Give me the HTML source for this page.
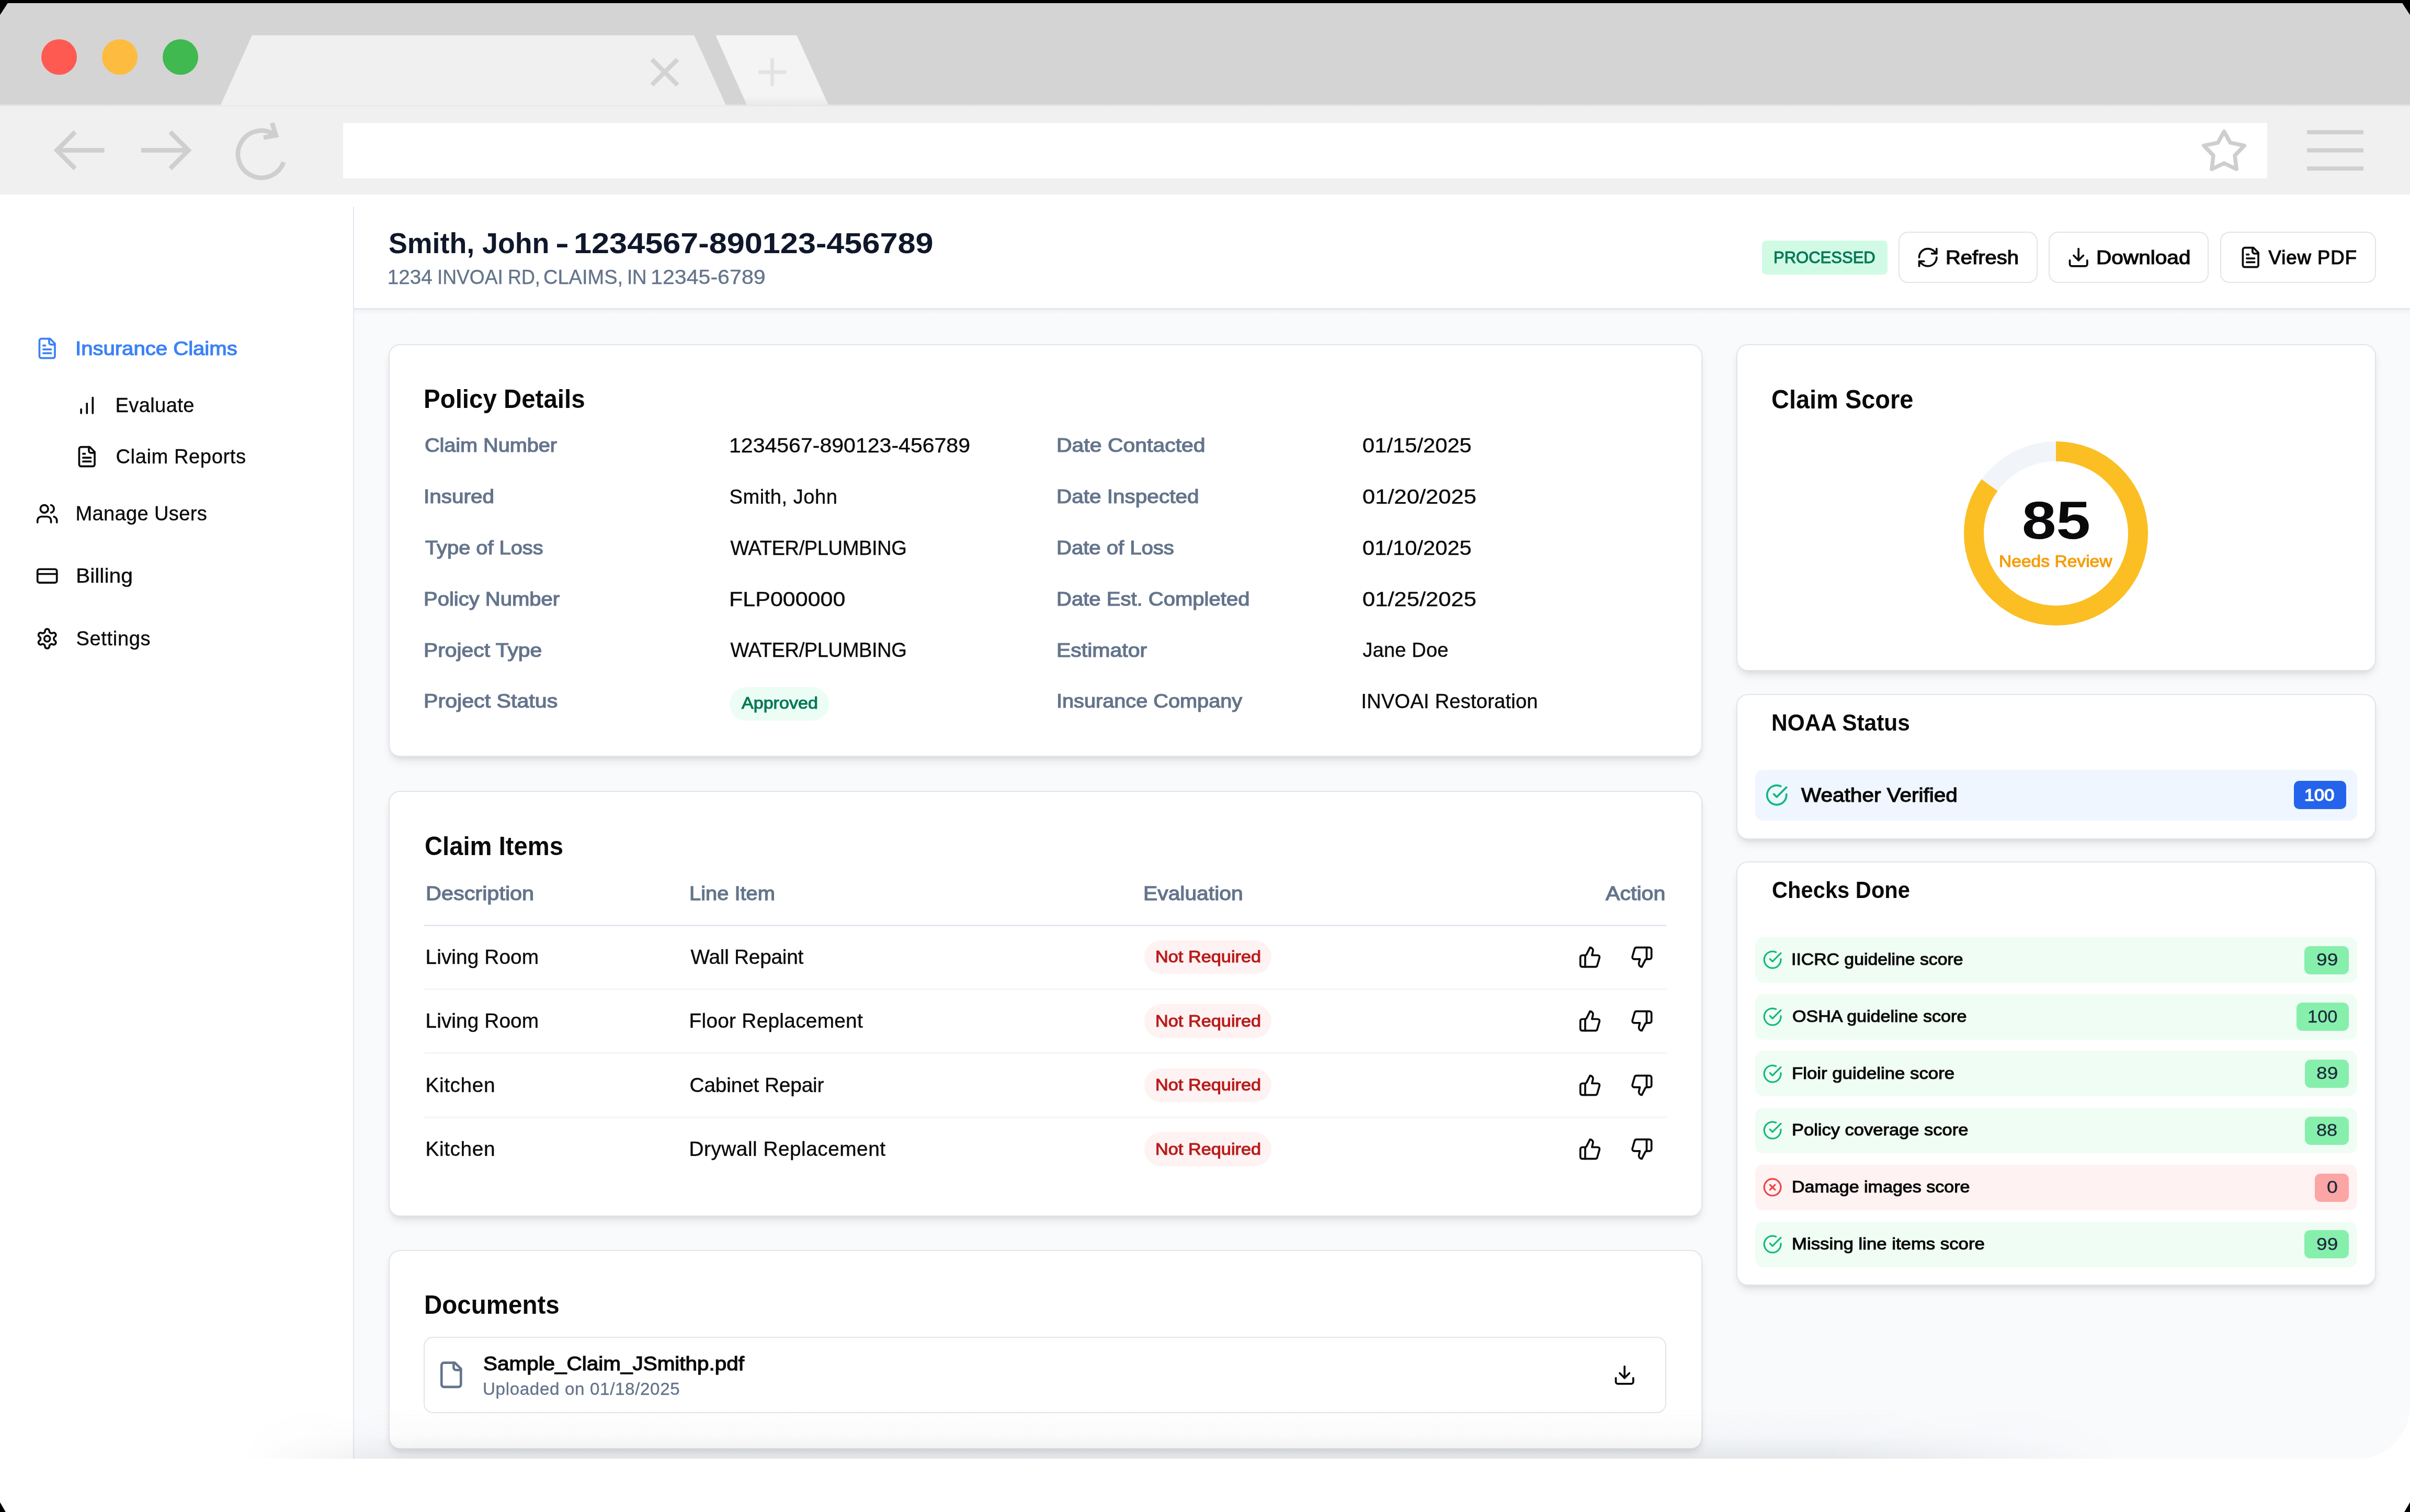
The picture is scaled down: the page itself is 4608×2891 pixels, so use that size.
<!DOCTYPE html>
<html><head><meta charset="utf-8"><title>Claim</title><style>
html,body{margin:0;padding:0}body{width:4608px;height:2891px;background:#000;position:relative;font-family:"Liberation Sans",sans-serif}
div,svg,span{position:absolute;box-sizing:border-box}span{white-space:nowrap;line-height:1;transform-origin:0 0}
.b{font-weight:700}
</style></head><body>
<div style="left:0;top:6px;width:4608px;height:2885px;clip-path:polygon(15px 0,4593px 0,4608px 23px,4608px 2866px,4597px 2885px,11px 2885px,0 2866px,0 23px);overflow:hidden;background:#fff">
<div style="left:0;top:-6px;width:4608px;height:2891px;will-change:transform">
<div style="left:0px;top:0px;width:4608px;height:201px;background:#d4d4d4;border-radius:0px;"></div>
<div style="left:0px;top:201px;width:4608px;height:171px;background:#f0f0f0;border-radius:0px;"></div>
<div style="left:0px;top:198px;width:4608px;height:6px;background:linear-gradient(#d4d4d4,#f0f0f0);border-radius:0px;"></div>
<div style="left:656px;top:234.5px;width:3678.5px;height:106.2px;background:#fff;border-radius:0px;"></div>
<svg style="left:0;top:0" width="4608" height="380" viewBox="0 0 4608 380"><defs><linearGradient id="ng" x1="0" y1="0" x2="0" y2="1"><stop offset="0" stop-color="#f4f4f4"/><stop offset=".86" stop-color="#f4f4f4"/><stop offset="1" stop-color="#e9e9e9"/></linearGradient></defs><polygon points="482,67.4 1327.2,67.4 1388.2,201.6 421.5,201.6" fill="#f0f0f0"/><polygon points="1368.2,67.4 1523.3,67.4 1584.3,201.3 1428.3,201.3" fill="url(#ng)"/><path d="M1246.400 113.500 L1295.400 162.500 M1295.400 113.500 L1246.400 162.500" stroke="#d3d3d3" stroke-width="8.700" fill="none"/><path d="M1450.200 138 H1503 M1476.600 111.500 V164.500" stroke="#e3e3e3" stroke-width="7" fill="none"/><g stroke="#cfcfcf" stroke-width="8.700" fill="none" stroke-linejoin="miter"><path d="M199.700 287.300 H108.700 M143.700 252.300 L108.700 287.300 L143.700 322.300"/><path d="M269.900 287.300 H360.400 M325.400 252.300 L360.400 287.300 L325.400 322.300"/><path d="M542.300 310.100 A45 45 0 1 1 526.600 258.500"/><path d="M520.100 235.100 L527.700 258.800 L504 263"/></g><path d="M4252.500 251.500 L4264.400 272.800 L4291.200 278.300 L4273 297.300 L4276.200 323.300 L4252.500 312.200 L4228.900 323.300 L4232 297.300 L4213.900 278.300 L4240.700 272.800 Z" fill="none" stroke="#cecece" stroke-width="7.500" stroke-linejoin="round"/><g fill="#d0d0d0"><rect x="4411" y="248.800" width="108" height="8"/><rect x="4411" y="283.500" width="108" height="8"/><rect x="4411" y="318.200" width="108" height="8"/></g></svg>
<div style="left:78.9px;top:74.8px;width:68px;height:68px;background:#ff5a52;border-radius:34px;"></div>
<div style="left:194.9px;top:74.8px;width:68px;height:68px;background:#fdbc40;border-radius:34px;"></div>
<div style="left:311.4px;top:74.8px;width:68px;height:68px;background:#3fb950;border-radius:34px;"></div>
<div style="left:0px;top:372px;width:4608px;height:2417px;background:#fff;border-radius:0px;"></div>
<div style="left:677px;top:592px;width:3931px;height:2197px;background:#f8fafc;border-radius:0 0 100px 0;"></div>
<div style="left:677px;top:372px;width:3931px;height:220px;background:#fff;border-radius:0;border-bottom:3px solid #e2e8f0"></div>
<div style="left:677px;top:592px;width:3931px;height:10px;background:linear-gradient(rgba(15,23,42,.035),rgba(15,23,42,0));border-radius:0px;"></div>
<div style="left:675px;top:395px;width:2.3px;height:2394px;background:#e2e8f0;border-radius:0px;"></div>
<div style="left:742.9px;top:658.3px;width:2511.8px;height:788.5px;background:#fff;border-radius:22px;border:2.7px solid #e4e4e7;box-shadow:0 11px 17px -3px rgba(0,0,0,.09),0 5px 11px -5px rgba(0,0,0,.09)"></div>
<div style="left:742.9px;top:1511.8px;width:2511.8px;height:814px;background:#fff;border-radius:22px;border:2.7px solid #e4e4e7;box-shadow:0 11px 17px -3px rgba(0,0,0,.09),0 5px 11px -5px rgba(0,0,0,.09)"></div>
<div style="left:742.9px;top:2389.8px;width:2511.8px;height:381px;background:#fff;border-radius:22px;border:2.7px solid #e4e4e7;box-shadow:0 11px 17px -3px rgba(0,0,0,.09),0 5px 11px -5px rgba(0,0,0,.09)"></div>
<div style="left:3319.9px;top:658.3px;width:1222.8px;height:625px;background:#fff;border-radius:22px;border:2.7px solid #e4e4e7;box-shadow:0 11px 17px -3px rgba(0,0,0,.09),0 5px 11px -5px rgba(0,0,0,.09)"></div>
<div style="left:3319.9px;top:1326.8px;width:1222.8px;height:278px;background:#fff;border-radius:22px;border:2.7px solid #e4e4e7;box-shadow:0 11px 17px -3px rgba(0,0,0,.09),0 5px 11px -5px rgba(0,0,0,.09)"></div>
<div style="left:3319.9px;top:1646.8px;width:1222.8px;height:811.5px;background:#fff;border-radius:22px;border:2.7px solid #e4e4e7;box-shadow:0 11px 17px -3px rgba(0,0,0,.09),0 5px 11px -5px rgba(0,0,0,.09)"></div>
<svg style="left:67.5px;top:644.3px" width="44.4" height="44.4" viewBox="0 0 24 24" fill="none" stroke="#3b82f6" stroke-width="2" stroke-linecap="round" stroke-linejoin="round"><path d="M15 2H6a2 2 0 0 0-2 2v16a2 2 0 0 0 2 2h12a2 2 0 0 0 2-2V7Z"/><path d="M14 2v4a2 2 0 0 0 2 2h4"/><path d="M10 9H8"/><path d="M16 13H8"/><path d="M16 17H8"/></svg>
<svg style="left:143.5px;top:752.8px" width="44.4" height="44.4" viewBox="0 0 24 24" fill="none" stroke="#0a0a0a" stroke-width="2" stroke-linecap="round" stroke-linejoin="round"><path d="M12 20V10"/><path d="M18 20V4"/><path d="M6 20v-4"/></svg>
<svg style="left:143.5px;top:850.5px" width="44.4" height="44.4" viewBox="0 0 24 24" fill="none" stroke="#0a0a0a" stroke-width="2" stroke-linecap="round" stroke-linejoin="round"><path d="M15 2H6a2 2 0 0 0-2 2v16a2 2 0 0 0 2 2h12a2 2 0 0 0 2-2V7Z"/><path d="M14 2v4a2 2 0 0 0 2 2h4"/><path d="M10 9H8"/><path d="M16 13H8"/><path d="M16 17H8"/></svg>
<svg style="left:67.8px;top:959.5px" width="44.4" height="44.4" viewBox="0 0 24 24" fill="none" stroke="#0a0a0a" stroke-width="2" stroke-linecap="round" stroke-linejoin="round"><path d="M16 21v-2a4 4 0 0 0-4-4H6a4 4 0 0 0-4 4v2"/><circle cx="9" cy="7" r="4"/><path d="M22 21v-2a4 4 0 0 0-3-3.87"/><path d="M16 3.13a4 4 0 0 1 0 7.75"/></svg>
<svg style="left:67.8px;top:1078.8px" width="44.4" height="44.4" viewBox="0 0 24 24" fill="none" stroke="#0a0a0a" stroke-width="2" stroke-linecap="round" stroke-linejoin="round"><rect width="20" height="14" x="2" y="5" rx="2"/><path d="M2 10h20"/></svg>
<svg style="left:67.8px;top:1198.5px" width="44.4" height="44.4" viewBox="0 0 24 24" fill="none" stroke="#0a0a0a" stroke-width="2" stroke-linecap="round" stroke-linejoin="round"><path d="M12.22 2h-.44a2 2 0 0 0-2 2v.18a2 2 0 0 1-1 1.73l-.43.25a2 2 0 0 1-2 0l-.15-.08a2 2 0 0 0-2.73.73l-.22.38a2 2 0 0 0 .73 2.73l.15.1a2 2 0 0 1 1 1.72v.51a2 2 0 0 1-1 1.74l-.15.09a2 2 0 0 0-.73 2.73l.22.38a2 2 0 0 0 2.73.73l.15-.08a2 2 0 0 1 2 0l.43.25a2 2 0 0 1 1 1.73V20a2 2 0 0 0 2 2h.44a2 2 0 0 0 2-2v-.18a2 2 0 0 1 1-1.73l.43-.25a2 2 0 0 1 2 0l.15.08a2 2 0 0 0 2.73-.73l.22-.39a2 2 0 0 0-.73-2.73l-.15-.08a2 2 0 0 1-1-1.74v-.5a2 2 0 0 1 1-1.74l.15-.09a2 2 0 0 0 .73-2.73l-.22-.38a2 2 0 0 0-2.73-.73l-.15.08a2 2 0 0 1-2 0l-.43-.25a2 2 0 0 1-1-1.73V4a2 2 0 0 0-2-2z"/><circle cx="12" cy="12" r="3"/></svg>
<div style="left:3369px;top:460px;width:239.5px;height:65px;background:#d1fae5;border-radius:8px;"></div>
<div style="left:3629.5px;top:443px;width:266px;height:98px;background:#fff;border-radius:18px;border:2.8px solid #e4e4e7"></div>
<div style="left:3917px;top:443px;width:306px;height:98px;background:#fff;border-radius:18px;border:2.8px solid #e4e4e7"></div>
<div style="left:4244.5px;top:443px;width:298.5px;height:98px;background:#fff;border-radius:18px;border:2.8px solid #e4e4e7"></div>
<svg style="left:3663.5px;top:470.3px" width="44.4" height="44.4" viewBox="0 0 24 24" fill="none" stroke="#0a0a0a" stroke-width="2" stroke-linecap="round" stroke-linejoin="round"><path d="M3 12a9 9 0 0 1 9-9 9.75 9.75 0 0 1 6.74 2.74L21 8"/><path d="M21 3v5h-5"/><path d="M21 12a9 9 0 0 1-9 9 9.75 9.75 0 0 1-6.74-2.74L3 16"/><path d="M8 16H3v5"/></svg>
<svg style="left:3952px;top:470.3px" width="44.4" height="44.4" viewBox="0 0 24 24" fill="none" stroke="#0a0a0a" stroke-width="2" stroke-linecap="round" stroke-linejoin="round"><path d="M21 15v4a2 2 0 0 1-2 2H5a2 2 0 0 1-2-2v-4"/><path d="m7 10 5 5 5-5"/><path d="M12 15V3"/></svg>
<svg style="left:4281.1px;top:470.3px" width="44.4" height="44.4" viewBox="0 0 24 24" fill="none" stroke="#0a0a0a" stroke-width="2" stroke-linecap="round" stroke-linejoin="round"><path d="M15 2H6a2 2 0 0 0-2 2v16a2 2 0 0 0 2 2h12a2 2 0 0 0 2-2V7Z"/><path d="M14 2v4a2 2 0 0 0 2 2h4"/><path d="M10 9H8"/><path d="M16 13H8"/><path d="M16 17H8"/></svg>
<div style="left:1395px;top:1314px;width:190px;height:64px;background:#ecfdf5;border-radius:32px;"></div>
<svg style="left:3751px;top:840px" width="360" height="360" viewBox="-180 -180 360 360"><circle r="157" fill="none" stroke="#f1f5f9" stroke-width="38"/><circle r="157" fill="none" stroke="#fbbf24" stroke-width="38" stroke-dasharray="838.491 986.46" transform="rotate(-90)"/></svg>
<div style="left:3355.5px;top:1471.5px;width:1151.5px;height:97px;background:#eff6ff;border-radius:15px;"></div>
<svg style="left:3375.3px;top:1497.55px" width="44.4" height="44.4" viewBox="0 0 24 24" fill="none" stroke="#10b981" stroke-width="2" stroke-linecap="round" stroke-linejoin="round"><path d="M22 11.08V12a10 10 0 1 1-5.93-9.14"/><path d="M22 4 12 14.01l-3-3"/></svg>
<div style="left:4385.5px;top:1493px;width:100px;height:54px;background:#2563eb;border-radius:10px;"></div>
<div style="left:3355.5px;top:1792px;width:1151.5px;height:87px;background:#f0fdf4;border-radius:15px;"></div>
<svg style="left:3370.3px;top:1816.3px" width="38.2" height="38.2" viewBox="0 0 24 24" fill="none" stroke="#10b981" stroke-width="2" stroke-linecap="round" stroke-linejoin="round"><path d="M22 11.08V12a10 10 0 1 1-5.93-9.14"/><path d="M22 4 12 14.01l-3-3"/></svg>
<div style="left:4405.5px;top:1808.5px;width:85px;height:54px;background:#86efac;border-radius:11px;"></div>
<div style="left:3355.5px;top:1900.75px;width:1151.5px;height:87px;background:#f0fdf4;border-radius:15px;"></div>
<svg style="left:3370.3px;top:1925.05px" width="38.2" height="38.2" viewBox="0 0 24 24" fill="none" stroke="#10b981" stroke-width="2" stroke-linecap="round" stroke-linejoin="round"><path d="M22 11.08V12a10 10 0 1 1-5.93-9.14"/><path d="M22 4 12 14.01l-3-3"/></svg>
<div style="left:4390.5px;top:1917.25px;width:100px;height:54px;background:#86efac;border-radius:11px;"></div>
<div style="left:3355.5px;top:2009.25px;width:1151.5px;height:87px;background:#f0fdf4;border-radius:15px;"></div>
<svg style="left:3370.3px;top:2033.55px" width="38.2" height="38.2" viewBox="0 0 24 24" fill="none" stroke="#10b981" stroke-width="2" stroke-linecap="round" stroke-linejoin="round"><path d="M22 11.08V12a10 10 0 1 1-5.93-9.14"/><path d="M22 4 12 14.01l-3-3"/></svg>
<div style="left:4407px;top:2025.75px;width:83.5px;height:54px;background:#86efac;border-radius:11px;"></div>
<div style="left:3355.5px;top:2118px;width:1151.5px;height:87px;background:#f0fdf4;border-radius:15px;"></div>
<svg style="left:3370.3px;top:2142.3px" width="38.2" height="38.2" viewBox="0 0 24 24" fill="none" stroke="#10b981" stroke-width="2" stroke-linecap="round" stroke-linejoin="round"><path d="M22 11.08V12a10 10 0 1 1-5.93-9.14"/><path d="M22 4 12 14.01l-3-3"/></svg>
<div style="left:4407px;top:2134.5px;width:83.5px;height:54px;background:#86efac;border-radius:11px;"></div>
<div style="left:3355.5px;top:2227px;width:1151.5px;height:87px;background:#fef2f2;border-radius:15px;"></div>
<svg style="left:3370.3px;top:2251.3px" width="38.2" height="38.2" viewBox="0 0 24 24" fill="none" stroke="#ef4444" stroke-width="2" stroke-linecap="round" stroke-linejoin="round"><circle cx="12" cy="12" r="10"/><path d="m15 9-6 6"/><path d="m9 9 6 6"/></svg>
<div style="left:4426px;top:2243.5px;width:64.5px;height:54px;background:#fca5a5;border-radius:11px;"></div>
<div style="left:3355.5px;top:2335.75px;width:1151.5px;height:87px;background:#f0fdf4;border-radius:15px;"></div>
<svg style="left:3370.3px;top:2360.05px" width="38.2" height="38.2" viewBox="0 0 24 24" fill="none" stroke="#10b981" stroke-width="2" stroke-linecap="round" stroke-linejoin="round"><path d="M22 11.08V12a10 10 0 1 1-5.93-9.14"/><path d="M22 4 12 14.01l-3-3"/></svg>
<div style="left:4405.5px;top:2352.25px;width:85px;height:54px;background:#86efac;border-radius:11px;"></div>
<div style="left:811px;top:1767.5px;width:2375px;height:3px;background:#e2e8f0;border-radius:0px;"></div>
<div style="left:2187.5px;top:1797.5px;width:243.5px;height:64.5px;background:#fef2f2;border-radius:33px;"></div>
<svg style="left:3018.3px;top:1807.8px" width="44.4" height="44.4" viewBox="0 0 24 24" fill="none" stroke="#0a0a0a" stroke-width="2" stroke-linecap="round" stroke-linejoin="round"><path d="M7 10v12"/><path d="M15 5.88 14 10h5.83a2 2 0 0 1 1.92 2.56l-2.33 8A2 2 0 0 1 17.5 22H4a2 2 0 0 1-2-2v-8a2 2 0 0 1 2-2h2.76a2 2 0 0 0 1.79-1.11L12 2a3.13 3.13 0 0 1 3 3.88Z"/></svg>
<svg style="left:3117.3px;top:1807.8px" width="44.4" height="44.4" viewBox="0 0 24 24" fill="none" stroke="#0a0a0a" stroke-width="2" stroke-linecap="round" stroke-linejoin="round"><path d="M17 14V2"/><path d="M9 18.12 10 14H4.17a2 2 0 0 1-1.92-2.56l2.33-8A2 2 0 0 1 6.5 2H20a2 2 0 0 1 2 2v8a2 2 0 0 1-2 2h-2.76a2 2 0 0 0-1.79 1.11L12 22a3.13 3.13 0 0 1-3-3.88Z"/></svg>
<div style="left:811px;top:1889.5px;width:2375px;height:3px;background:#f1f5f9;border-radius:0px;"></div>
<div style="left:2187.5px;top:1920px;width:243.5px;height:64.5px;background:#fef2f2;border-radius:33px;"></div>
<svg style="left:3018.3px;top:1930.3px" width="44.4" height="44.4" viewBox="0 0 24 24" fill="none" stroke="#0a0a0a" stroke-width="2" stroke-linecap="round" stroke-linejoin="round"><path d="M7 10v12"/><path d="M15 5.88 14 10h5.83a2 2 0 0 1 1.92 2.56l-2.33 8A2 2 0 0 1 17.5 22H4a2 2 0 0 1-2-2v-8a2 2 0 0 1 2-2h2.76a2 2 0 0 0 1.79-1.11L12 2a3.13 3.13 0 0 1 3 3.88Z"/></svg>
<svg style="left:3117.3px;top:1930.3px" width="44.4" height="44.4" viewBox="0 0 24 24" fill="none" stroke="#0a0a0a" stroke-width="2" stroke-linecap="round" stroke-linejoin="round"><path d="M17 14V2"/><path d="M9 18.12 10 14H4.17a2 2 0 0 1-1.92-2.56l2.33-8A2 2 0 0 1 6.5 2H20a2 2 0 0 1 2 2v8a2 2 0 0 1-2 2h-2.76a2 2 0 0 0-1.79 1.11L12 22a3.13 3.13 0 0 1-3-3.88Z"/></svg>
<div style="left:811px;top:2012px;width:2375px;height:3px;background:#f1f5f9;border-radius:0px;"></div>
<div style="left:2187.5px;top:2042.5px;width:243.5px;height:64.5px;background:#fef2f2;border-radius:33px;"></div>
<svg style="left:3018.3px;top:2052.8px" width="44.4" height="44.4" viewBox="0 0 24 24" fill="none" stroke="#0a0a0a" stroke-width="2" stroke-linecap="round" stroke-linejoin="round"><path d="M7 10v12"/><path d="M15 5.88 14 10h5.83a2 2 0 0 1 1.92 2.56l-2.33 8A2 2 0 0 1 17.5 22H4a2 2 0 0 1-2-2v-8a2 2 0 0 1 2-2h2.76a2 2 0 0 0 1.79-1.11L12 2a3.13 3.13 0 0 1 3 3.88Z"/></svg>
<svg style="left:3117.3px;top:2052.8px" width="44.4" height="44.4" viewBox="0 0 24 24" fill="none" stroke="#0a0a0a" stroke-width="2" stroke-linecap="round" stroke-linejoin="round"><path d="M17 14V2"/><path d="M9 18.12 10 14H4.17a2 2 0 0 1-1.92-2.56l2.33-8A2 2 0 0 1 6.5 2H20a2 2 0 0 1 2 2v8a2 2 0 0 1-2 2h-2.76a2 2 0 0 0-1.79 1.11L12 22a3.13 3.13 0 0 1-3-3.88Z"/></svg>
<div style="left:811px;top:2134.5px;width:2375px;height:3px;background:#f1f5f9;border-radius:0px;"></div>
<div style="left:2187.5px;top:2165px;width:243.5px;height:64.5px;background:#fef2f2;border-radius:33px;"></div>
<svg style="left:3018.3px;top:2175.3px" width="44.4" height="44.4" viewBox="0 0 24 24" fill="none" stroke="#0a0a0a" stroke-width="2" stroke-linecap="round" stroke-linejoin="round"><path d="M7 10v12"/><path d="M15 5.88 14 10h5.83a2 2 0 0 1 1.92 2.56l-2.33 8A2 2 0 0 1 17.5 22H4a2 2 0 0 1-2-2v-8a2 2 0 0 1 2-2h2.76a2 2 0 0 0 1.79-1.11L12 2a3.13 3.13 0 0 1 3 3.88Z"/></svg>
<svg style="left:3117.3px;top:2175.3px" width="44.4" height="44.4" viewBox="0 0 24 24" fill="none" stroke="#0a0a0a" stroke-width="2" stroke-linecap="round" stroke-linejoin="round"><path d="M17 14V2"/><path d="M9 18.12 10 14H4.17a2 2 0 0 1-1.92-2.56l2.33-8A2 2 0 0 1 6.5 2H20a2 2 0 0 1 2 2v8a2 2 0 0 1-2 2h-2.76a2 2 0 0 0-1.79 1.11L12 22a3.13 3.13 0 0 1-3-3.88Z"/></svg>
<div style="left:809.7px;top:2556.2px;width:2376.6px;height:146.1px;background:#fff;border-radius:18px;border:2.8px solid #e4e4e7"></div>
<svg style="left:834.5px;top:2601.25px" width="55.5" height="55.5" viewBox="0 0 24 24" fill="none" stroke="#64748b" stroke-width="2" stroke-linecap="round" stroke-linejoin="round"><path d="M15 2H6a2 2 0 0 0-2 2v16a2 2 0 0 0 2 2h12a2 2 0 0 0 2-2V7Z"/><path d="M14 2v4a2 2 0 0 0 2 2h4"/></svg>
<svg style="left:3083.8px;top:2606.8px" width="44.4" height="44.4" viewBox="0 0 24 24" fill="none" stroke="#0a0a0a" stroke-width="2" stroke-linecap="round" stroke-linejoin="round"><path d="M21 15v4a2 2 0 0 1-2 2H5a2 2 0 0 1-2-2v-4"/><path d="m7 10 5 5 5-5"/><path d="M12 15V3"/></svg>
<div style="left:0;top:2690px;width:4608px;height:99px;background:linear-gradient(to bottom,rgba(70,75,90,0) 0%,rgba(70,75,90,.025) 55%,rgba(70,75,90,.105) 100%);-webkit-mask-image:linear-gradient(to right,transparent 470px,#000 800px,#000 3500px,transparent 4050px);mask-image:linear-gradient(to right,transparent 470px,#000 800px,#000 3500px,transparent 4050px);border-radius:0 0 100px 0"></div>
<div style="left:0px;top:2789px;width:4608px;height:102px;background:#fff;border-radius:0px;"></div>
<span id="t0" style="left:143.50px;top:649.15px;font-size:36.43px;color:#3b82f6;-webkit-text-stroke:1.24px currentColor;transform:scaleX(1.1007)">Insurance Claims</span>
<span id="t1" style="left:220.50px;top:756.24px;font-size:38.10px;color:#0a0a0a;-webkit-text-stroke:0.38px currentColor;letter-spacing:0.386px">Evaluate</span>
<span id="t2" style="left:221.50px;top:853.74px;font-size:38.10px;color:#0a0a0a;-webkit-text-stroke:0.38px currentColor;letter-spacing:0.600px">Claim Reports</span>
<span id="t3" style="left:144.50px;top:962.74px;font-size:38.10px;color:#0a0a0a;-webkit-text-stroke:0.38px currentColor;letter-spacing:0.327px">Manage Users</span>
<span id="t4" style="left:144.50px;top:1081.74px;font-size:38.10px;color:#0a0a0a;-webkit-text-stroke:0.38px currentColor;transform:scaleX(1.0722)">Billing</span>
<span id="t5" style="left:145.50px;top:1201.74px;font-size:38.10px;color:#0a0a0a;-webkit-text-stroke:0.38px currentColor;letter-spacing:0.643px">Settings</span>
<span id="t6" class="b" style="left:743.40px;top:436.76px;font-size:56.27px;color:#0f172a;transform:scaleX(0.9548)">Smith, John</span>
<span id="t7" class="b" style="left:1061.90px;top:436.76px;font-size:56.27px;color:#0f172a;transform:scaleX(1.3835)">-</span>
<span id="t8" class="b" style="left:1097.00px;top:436.76px;font-size:56.27px;color:#0f172a;transform:scaleX(1.0879)">1234567-890123-456789</span>
<span id="t9" style="left:740.70px;top:511.06px;font-size:38.67px;color:#64748b;-webkit-text-stroke:0.39px currentColor">1234</span>
<span id="t10" style="left:836.30px;top:511.06px;font-size:38.67px;color:#64748b;-webkit-text-stroke:0.39px currentColor;letter-spacing:-0.036px;transform:scaleX(0.9616)">INVOAI</span>
<span id="t11" style="left:971.00px;top:511.06px;font-size:38.67px;color:#64748b;-webkit-text-stroke:0.39px currentColor;transform:scaleX(0.9275)">RD,</span>
<span id="t12" style="left:1039.20px;top:511.06px;font-size:38.67px;color:#64748b;-webkit-text-stroke:0.39px currentColor;letter-spacing:0.060px;transform:scaleX(0.9813)">CLAIMS,</span>
<span id="t13" style="left:1198.80px;top:511.06px;font-size:38.67px;color:#64748b;-webkit-text-stroke:0.39px currentColor;letter-spacing:-0.900px">IN</span>
<span id="t14" style="left:1243.60px;top:511.06px;font-size:38.67px;color:#64748b;-webkit-text-stroke:0.39px currentColor;transform:scaleX(1.0644)">12345-6789</span>
<span id="t15" style="left:3391.00px;top:476.72px;font-size:31.03px;color:#047857;-webkit-text-stroke:1.06px currentColor">PROCESSED</span>
<span id="t16" style="left:3719.50px;top:475.15px;font-size:36.43px;color:#0a0a0a;-webkit-text-stroke:1.24px currentColor;transform:scaleX(1.0976)">Refresh</span>
<span id="t17" style="left:4007.50px;top:475.15px;font-size:36.43px;color:#0a0a0a;-webkit-text-stroke:1.24px currentColor;transform:scaleX(1.1140)">Download</span>
<span id="t18" style="left:4337.50px;top:475.15px;font-size:36.43px;color:#0a0a0a;-webkit-text-stroke:1.24px currentColor;letter-spacing:1.029px">View PDF</span>
<span id="t19" class="b" style="left:809.50px;top:737.57px;font-size:50.11px;color:#0a0a0a;transform:scaleX(0.9469)">Policy Details</span>
<span id="t20" style="left:811.50px;top:834.15px;font-size:36.43px;color:#64748b;-webkit-text-stroke:1.24px currentColor;letter-spacing:-0.082px;transform:scaleX(1.0909)">Claim Number</span>
<span id="t21" style="left:809.50px;top:932.15px;font-size:36.43px;color:#64748b;-webkit-text-stroke:1.24px currentColor;transform:scaleX(1.1111)">Insured</span>
<span id="t22" style="left:812.50px;top:1030.15px;font-size:36.43px;color:#64748b;-webkit-text-stroke:1.24px currentColor;transform:scaleX(1.0927)">Type of Loss</span>
<span id="t23" style="left:809.50px;top:1128.15px;font-size:36.43px;color:#64748b;-webkit-text-stroke:1.24px currentColor;transform:scaleX(1.0983)">Policy Number</span>
<span id="t24" style="left:809.50px;top:1225.65px;font-size:36.43px;color:#64748b;-webkit-text-stroke:1.24px currentColor;transform:scaleX(1.1212)">Project Type</span>
<span id="t25" style="left:809.50px;top:1323.15px;font-size:36.43px;color:#64748b;-webkit-text-stroke:1.24px currentColor;transform:scaleX(1.1301)">Project Status</span>
<span id="t26" style="left:1393.50px;top:832.74px;font-size:38.10px;color:#0a0a0a;-webkit-text-stroke:0.38px currentColor;transform:scaleX(1.0778)">1234567-890123-456789</span>
<span id="t27" style="left:1394.50px;top:930.74px;font-size:38.10px;color:#0a0a0a;-webkit-text-stroke:0.38px currentColor;letter-spacing:0.540px">Smith, John</span>
<span id="t28" style="left:1396.50px;top:1028.74px;font-size:38.10px;color:#0a0a0a;-webkit-text-stroke:0.38px currentColor;letter-spacing:-0.415px">WATER/PLUMBING</span>
<span id="t29" style="left:1393.50px;top:1126.74px;font-size:38.10px;color:#0a0a0a;-webkit-text-stroke:0.38px currentColor;transform:scaleX(1.1295)">FLP000000</span>
<span id="t30" style="left:1396.50px;top:1224.24px;font-size:38.10px;color:#0a0a0a;-webkit-text-stroke:0.38px currentColor;letter-spacing:-0.415px">WATER/PLUMBING</span>
<span id="t31" style="left:2019.50px;top:834.15px;font-size:36.43px;color:#64748b;-webkit-text-stroke:1.24px currentColor;transform:scaleX(1.1245)">Date Contacted</span>
<span id="t32" style="left:2019.50px;top:932.15px;font-size:36.43px;color:#64748b;-webkit-text-stroke:1.24px currentColor;transform:scaleX(1.1120)">Date Inspected</span>
<span id="t33" style="left:2019.50px;top:1030.15px;font-size:36.43px;color:#64748b;-webkit-text-stroke:1.24px currentColor;letter-spacing:-0.082px;transform:scaleX(1.1045)">Date of Loss</span>
<span id="t34" style="left:2019.50px;top:1128.15px;font-size:36.43px;color:#64748b;-webkit-text-stroke:1.24px currentColor;transform:scaleX(1.0994)">Date Est. Completed</span>
<span id="t35" style="left:2019.50px;top:1225.65px;font-size:36.43px;color:#64748b;-webkit-text-stroke:1.24px currentColor;transform:scaleX(1.1258)">Estimator</span>
<span id="t36" style="left:2019.50px;top:1323.15px;font-size:36.43px;color:#64748b;-webkit-text-stroke:1.24px currentColor;transform:scaleX(1.0895)">Insurance Company</span>
<span id="t37" style="left:2604.50px;top:832.74px;font-size:38.10px;color:#0a0a0a;-webkit-text-stroke:0.38px currentColor;transform:scaleX(1.0957)">01/15/2025</span>
<span id="t38" style="left:2604.50px;top:930.74px;font-size:38.10px;color:#0a0a0a;-webkit-text-stroke:0.38px currentColor;transform:scaleX(1.1437)">01/20/2025</span>
<span id="t39" style="left:2604.50px;top:1028.74px;font-size:38.10px;color:#0a0a0a;-webkit-text-stroke:0.38px currentColor;transform:scaleX(1.0957)">01/10/2025</span>
<span id="t40" style="left:2604.50px;top:1126.74px;font-size:38.10px;color:#0a0a0a;-webkit-text-stroke:0.38px currentColor;transform:scaleX(1.1437)">01/25/2025</span>
<span id="t41" style="left:2605.50px;top:1224.24px;font-size:38.10px;color:#0a0a0a;-webkit-text-stroke:0.38px currentColor;letter-spacing:0.129px">Jane Doe</span>
<span id="t42" style="left:2602.50px;top:1321.74px;font-size:38.10px;color:#0a0a0a;-webkit-text-stroke:0.38px currentColor;letter-spacing:0.212px">INVOAI Restoration</span>
<span id="t43" style="left:1418.00px;top:1329.15px;font-size:31.71px;color:#047857;-webkit-text-stroke:1.08px currentColor;transform:scaleX(1.0747)">Approved</span>
<span id="t44" class="b" style="left:3387.00px;top:739.07px;font-size:50.11px;color:#0a0a0a;transform:scaleX(0.9371)">Claim Score</span>
<span id="t45" class="b" style="left:3865.50px;top:944.93px;font-size:101.65px;color:#09090b;transform:scaleX(1.1591)">85</span>
<span id="t46" style="left:3821.50px;top:1058.15px;font-size:31.71px;color:#f59e0b;-webkit-text-stroke:1.08px currentColor;transform:scaleX(1.0595)">Needs Review</span>
<span id="t47" class="b" style="left:3386.50px;top:1360.42px;font-size:44.38px;color:#0a0a0a;transform:scaleX(0.9561)">NOAA Status</span>
<span id="t48" style="left:3444.00px;top:1502.08px;font-size:37.11px;color:#0a0a0a;-webkit-text-stroke:1.26px currentColor;transform:scaleX(1.0919)">Weather Verified</span>
<span id="t49" style="left:4406.00px;top:1504.66px;font-size:31.11px;color:#fff;-webkit-text-stroke:1.49px currentColor;transform:scaleX(1.1024)">100</span>
<span id="t50" class="b" style="left:3387.50px;top:1680.42px;font-size:44.38px;color:#0a0a0a;transform:scaleX(0.9389)">Checks Done</span>
<span id="t51" style="left:3424.50px;top:1819.45px;font-size:31.71px;color:#0a0a0a;-webkit-text-stroke:1.08px currentColor;transform:scaleX(1.0656)">IICRC guideline score</span>
<span id="t52" style="left:4428.50px;top:1818.22px;font-size:33.16px;color:#1e293b;-webkit-text-stroke:0.33px currentColor;transform:scaleX(1.1195)">99</span>
<span id="t53" style="left:3426.50px;top:1928.20px;font-size:31.71px;color:#0a0a0a;-webkit-text-stroke:1.08px currentColor;transform:scaleX(1.0747)">OSHA guideline score</span>
<span id="t54" style="left:4411.50px;top:1926.97px;font-size:33.16px;color:#1e293b;-webkit-text-stroke:0.33px currentColor;transform:scaleX(1.0393)">100</span>
<span id="t55" style="left:3425.50px;top:2036.70px;font-size:31.71px;color:#0a0a0a;-webkit-text-stroke:1.08px currentColor;transform:scaleX(1.0964)">Floir guideline score</span>
<span id="t56" style="left:4428.50px;top:2035.47px;font-size:33.16px;color:#1e293b;-webkit-text-stroke:0.33px currentColor;transform:scaleX(1.1195)">89</span>
<span id="t57" style="left:3425.50px;top:2145.45px;font-size:31.71px;color:#0a0a0a;-webkit-text-stroke:1.08px currentColor;transform:scaleX(1.0880)">Policy coverage score</span>
<span id="t58" style="left:4428.50px;top:2144.22px;font-size:33.16px;color:#1e293b;-webkit-text-stroke:0.33px currentColor;transform:scaleX(1.0908)">88</span>
<span id="t59" style="left:3425.50px;top:2254.45px;font-size:31.71px;color:#0a0a0a;-webkit-text-stroke:1.08px currentColor;transform:scaleX(1.0732)">Damage images score</span>
<span id="t60" style="left:4448.50px;top:2253.22px;font-size:33.16px;color:#1e293b;-webkit-text-stroke:0.33px currentColor;transform:scaleX(1.1333)">0</span>
<span id="t61" style="left:3425.50px;top:2363.20px;font-size:31.71px;color:#0a0a0a;-webkit-text-stroke:1.08px currentColor;transform:scaleX(1.0961)">Missing line items score</span>
<span id="t62" style="left:4428.50px;top:2361.97px;font-size:33.16px;color:#1e293b;-webkit-text-stroke:0.33px currentColor;transform:scaleX(1.1195)">99</span>
<span id="t63" class="b" style="left:812.00px;top:1592.68px;font-size:49.39px;color:#0a0a0a;transform:scaleX(0.9560)">Claim Items</span>
<span id="t64" style="left:813.50px;top:1689.58px;font-size:37.11px;color:#64748b;-webkit-text-stroke:1.26px currentColor;transform:scaleX(1.1160)">Description</span>
<span id="t65" style="left:1317.50px;top:1689.58px;font-size:37.11px;color:#64748b;-webkit-text-stroke:1.26px currentColor;transform:scaleX(1.0743)">Line Item</span>
<span id="t66" style="left:2186.00px;top:1689.58px;font-size:37.11px;color:#64748b;-webkit-text-stroke:1.26px currentColor;transform:scaleX(1.1000)">Evaluation</span>
<span id="t67" style="left:3070.00px;top:1689.58px;font-size:37.11px;color:#64748b;-webkit-text-stroke:1.26px currentColor;transform:scaleX(1.1079)">Action</span>
<span id="t68" style="left:813.50px;top:1810.64px;font-size:38.81px;color:#0a0a0a;-webkit-text-stroke:0.39px currentColor;letter-spacing:0.090px">Living Room</span>
<span id="t69" style="left:1320.50px;top:1810.64px;font-size:38.81px;color:#0a0a0a;-webkit-text-stroke:0.39px currentColor;letter-spacing:-0.245px">Wall Repaint</span>
<span id="t70" style="left:2208.50px;top:1814.15px;font-size:31.71px;color:#b91c1c;-webkit-text-stroke:1.08px currentColor;transform:scaleX(1.0820)">Not Required</span>
<span id="t71" style="left:813.50px;top:1933.14px;font-size:38.81px;color:#0a0a0a;-webkit-text-stroke:0.39px currentColor;letter-spacing:0.090px">Living Room</span>
<span id="t72" style="left:1317.50px;top:1933.14px;font-size:38.81px;color:#0a0a0a;-webkit-text-stroke:0.39px currentColor;letter-spacing:0.281px">Floor Replacement</span>
<span id="t73" style="left:2208.50px;top:1936.65px;font-size:31.71px;color:#b91c1c;-webkit-text-stroke:1.08px currentColor;transform:scaleX(1.0820)">Not Required</span>
<span id="t74" style="left:813.50px;top:2055.64px;font-size:38.81px;color:#0a0a0a;-webkit-text-stroke:0.39px currentColor;letter-spacing:0.600px">Kitchen</span>
<span id="t75" style="left:1318.50px;top:2055.64px;font-size:38.81px;color:#0a0a0a;-webkit-text-stroke:0.39px currentColor;letter-spacing:-0.138px">Cabinet Repair</span>
<span id="t76" style="left:2208.50px;top:2059.15px;font-size:31.71px;color:#b91c1c;-webkit-text-stroke:1.08px currentColor;transform:scaleX(1.0820)">Not Required</span>
<span id="t77" style="left:813.50px;top:2178.14px;font-size:38.81px;color:#0a0a0a;-webkit-text-stroke:0.39px currentColor;letter-spacing:0.600px">Kitchen</span>
<span id="t78" style="left:1317.50px;top:2178.14px;font-size:38.81px;color:#0a0a0a;-webkit-text-stroke:0.39px currentColor;letter-spacing:0.500px">Drywall Replacement</span>
<span id="t79" style="left:2208.50px;top:2181.65px;font-size:31.71px;color:#b91c1c;-webkit-text-stroke:1.08px currentColor;transform:scaleX(1.0820)">Not Required</span>
<span id="t80" class="b" style="left:811.00px;top:2470.07px;font-size:50.11px;color:#0a0a0a;transform:scaleX(0.9478)">Documents</span>
<span id="t81" style="left:924.00px;top:2589.01px;font-size:37.78px;color:#0a0a0a;-webkit-text-stroke:1.28px currentColor;transform:scaleX(1.0708)">Sample_Claim_JSmithp.pdf</span>
<span id="t82" style="left:923.00px;top:2639.42px;font-size:33.16px;color:#64748b;-webkit-text-stroke:0.33px currentColor;letter-spacing:0.643px">Uploaded on 01/18/2025</span>
</div></div>
</body></html>
